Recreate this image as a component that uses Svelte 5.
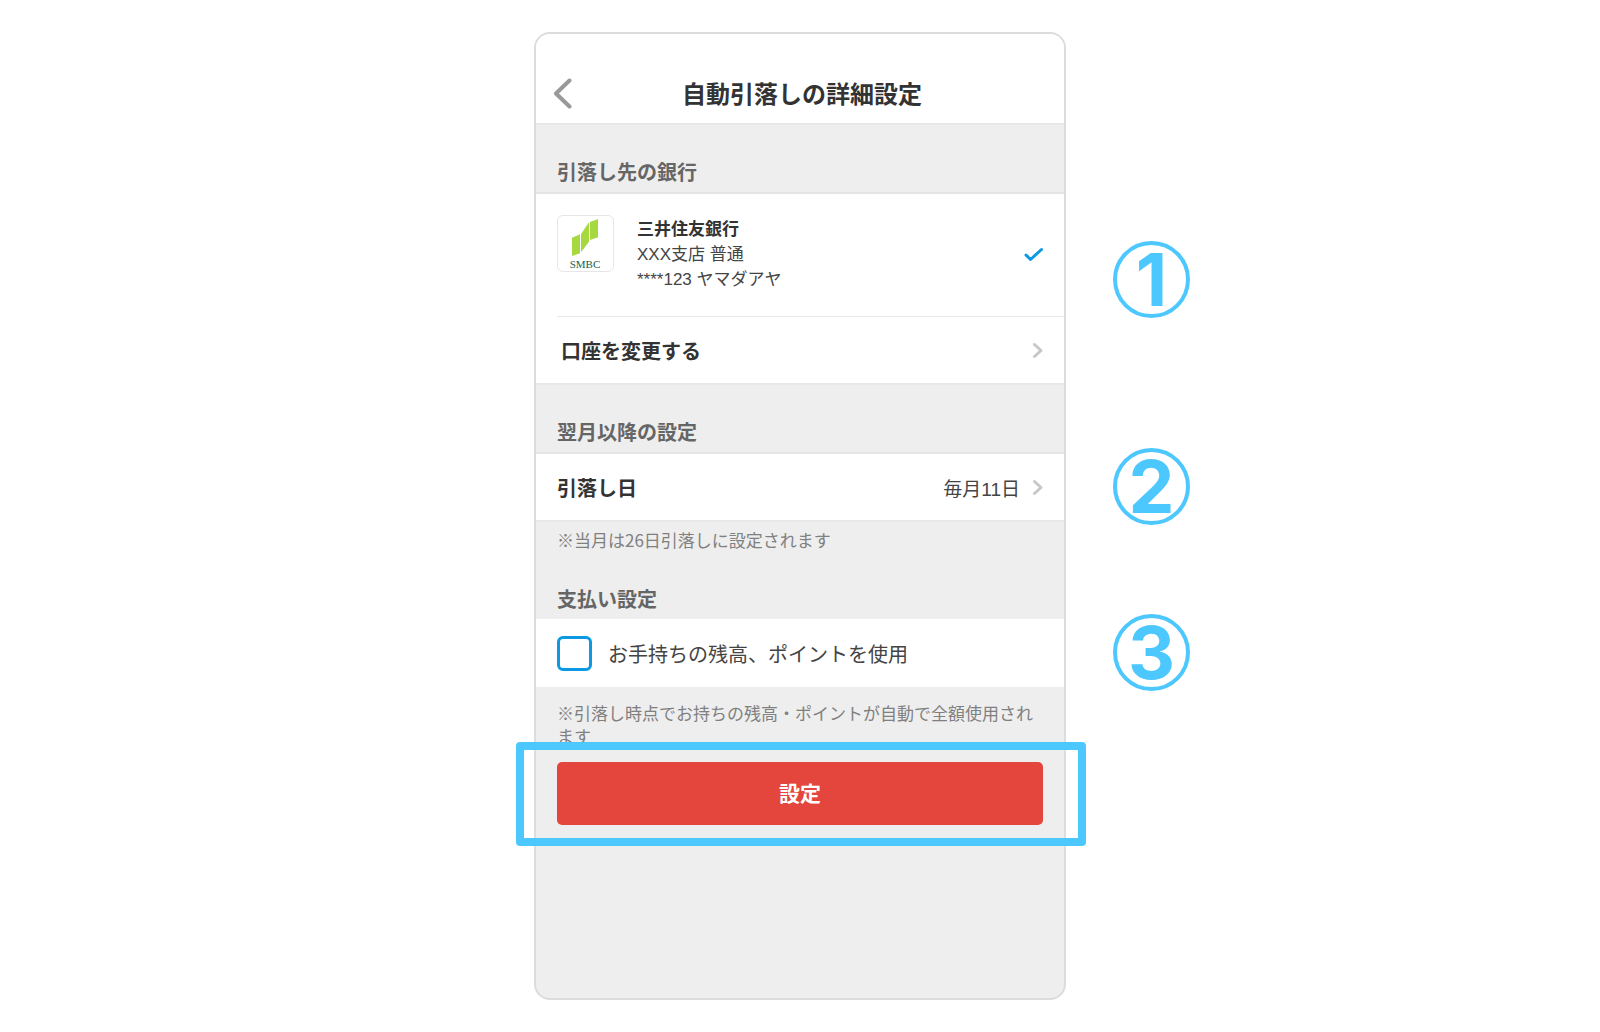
<script>
	let usePoints = false;

	const account = {
		bank: '三井住友銀行',
		branch: 'XXX支店 普通',
		holder: '****123 ヤマダアヤ'
	};
</script>

<style>
	:global(body) {
		margin: 0;
		background: #fff;
	}

	.page {
		box-sizing: border-box;
		display: flex;
		justify-content: center;
		min-height: 100vh;
		padding: 32px;
		font-family: "Noto Sans CJK JP", sans-serif;
		color: #333;
	}

	.page * {
		box-sizing: border-box;
	}

	.phone {
		width: 100%;
		max-width: 532px;
		border: 2px solid #dcdcdc;
		border-radius: 16px;
		background: #eee;
	}

	header {
		display: grid;
		grid-template-columns: 44px 1fr 40px;
		align-items: center;
		padding: 28px 14px 0;
		height: 89px;
		background: #fff;
		border-radius: 14px 14px 0 0;
	}

	h1, h2, p {
		margin: 0;
	}

	h1 {
		font-size: 24px;
		line-height: 32px;
		text-align: center;
	}

	h2 {
		padding: 0 21px 4px;
		font-size: 20px;
		line-height: 32px;
		color: #666;
	}

	button {
		font: inherit;
		color: inherit;
		border: none;
		background: none;
		padding: 0;
		cursor: pointer;
	}

	svg {
		display: block;
		fill: none;
		stroke-linecap: round;
		stroke-linejoin: round;
	}

	.back {
		justify-self: start;
		padding: 0 3px;
	}

	.back svg {
		stroke: #999;
		stroke-width: 4;
	}

	.group {
		padding-top: 31px;
		border-top: 2px solid #e8e8e8;
	}

	.group.plain {
		padding-top: 32px;
		border: none;
	}

	.card {
		position: relative;
		background: #fff;
	}

	.lined {
		border-top: 2px solid #e4e4e4;
	}

	.account {
		display: flex;
		align-items: flex-start;
		height: 123px;
		margin-left: 21px;
		padding: 21px 21px 0 0;
		border-bottom: 1px solid #e8e8e8;
		font-family: "Liberation Sans", "Noto Sans CJK JP", sans-serif;
		font-size: 17px;
		line-height: 25px;
	}

	.logo {
		width: 57px;
		height: 57px;
		margin-right: 23px;
		border: 1px solid #e6e6e6;
		border-radius: 6px;
	}

	.logo polygon {
		fill: #a6d840;
	}

	.logo text {
		font-family: "Liberation Serif", serif;
		font-size: 33px;
		fill: #22604a;
	}

	.owner {
		flex: 1;
		padding-top: 2px;
	}

	.owner p,
	.value {
		color: #444;
	}

	.check {
		margin-top: 32px;
		stroke: #0a99e2;
		stroke-width: 3;
	}

	.row {
		display: flex;
		align-items: center;
		width: 100%;
		height: 66px;
		padding: 0 21px;
		font-size: 20px;
		text-align: left;
	}

	.change {
		padding-left: 25px;
	}

	.row strong {
		flex: 1;
	}

	.value {
		font-family: "Liberation Sans", "Noto Sans CJK JP", sans-serif;
		font-size: 19px;
	}

	.row svg {
		margin-left: 12px;
		stroke: #c7c7cc;
		stroke-width: 3;
	}

	.option {
		height: 68px;
		color: #444;
	}

	.option input {
		appearance: none;
		width: 35px;
		height: 35px;
		margin: 0 16px 0 0;
		border: 3px solid #0a99e2;
		border-radius: 6px;
		background: #fff;
	}

	.option input:checked {
		background: #0a99e2;
	}

	.note {
		padding: 6px 21px 0;
		font-size: 17px;
		line-height: 23px;
		color: #808080;
	}

	.after {
		border-top: 2px solid #e8e8e8;
	}

	.long {
		padding-top: 14px;
	}

	.submit {
		position: relative;
		margin: 15px 21px 0;
	}

	.submit button {
		width: 100%;
		height: 63px;
		padding-bottom: 4px;
		border-radius: 5px;
		background: #e4453c;
		color: #fff;
		font-size: 21px;
		font-weight: 700;
	}

	/* frame around the button the guide points at */
	.submit::after {
		content: '';
		position: absolute;
		inset: -20px -43px -21px -41px;
		border: 8px solid #4dc8ff;
		border-radius: 4px;
		pointer-events: none;
	}

	.badge {
		position: absolute;
		top: 50%;
		left: calc(100% + 49px);
		display: flex;
		align-items: center;
		justify-content: center;
		width: 77px;
		height: 77px;
		margin-top: -39px;
		border: 4px solid #4dc8ff;
		border-radius: 50%;
		color: #4dc8ff;
		font-family: Inter, sans-serif;
		font-size: 73px;
		font-weight: 700;
		line-height: 69px;
	}

	.badge.first {
		top: 86px;
	}
</style>

{#snippet chevron()}
	<svg width="11" height="17" viewBox="0 0 11 17"><path d="M2.500 2.500 9 8.500 2.500 14.500" /></svg>
{/snippet}

<div class="page">
	<main class="phone">
		<header>
			<button class="back" aria-label="戻る">
				<svg width="20" height="32" viewBox="0 0 20 32"><path d="M16.500 3.500 3 16.500 16.500 29.500" /></svg>
			</button>
			<h1>自動引落しの詳細設定</h1>
		</header>

		<section class="group">
			<h2>引落し先の銀行</h2>
			<div class="card lined">
				<div class="account">
					<svg class="logo" viewBox="3 3 165 165">
						<polygon points="45,68 69,58 69,115 45,123" />
						<polygon points="72,57 96,22 96,80 72,112" />
						<polygon points="99,21 123,12 123,67 99,75" />
						<text x="84" y="158" text-anchor="middle">SMBC</text>
					</svg>
					<div class="owner">
						<strong>{account.bank}</strong>
						<p>{account.branch}</p>
						<p>{account.holder}</p>
					</div>
					<svg class="check" width="19" height="15" viewBox="0 0 19 15"><path d="M2 8 6.500 12.500 17.500 2.500" /></svg>
				</div>
				<button class="row change">
					<strong>口座を変更する</strong>
					{@render chevron()}
				</button>
				<span class="badge first">1</span>
			</div>
		</section>

		<section class="group">
			<h2>翌月以降の設定</h2>
			<div class="card lined">
				<button class="row">
					<strong>引落し日</strong>
					<span class="value">毎月11日</span>
					{@render chevron()}
				</button>
				<span class="badge">2</span>
			</div>
			<p class="note after">※当月は26日引落しに設定されます</p>
		</section>

		<section class="group plain">
			<h2>支払い設定</h2>
			<div class="card">
				<label class="row option">
					<input type="checkbox" bind:checked={usePoints}>
					お手持ちの残高、ポイントを使用
				</label>
				<span class="badge">3</span>
			</div>
			<p class="note long">※引落し時点でお持ちの残高・ポイントが自動で全額使用されます</p>
		</section>

		<div class="submit">
			<button>設定</button>
		</div>
	</main>
</div>
